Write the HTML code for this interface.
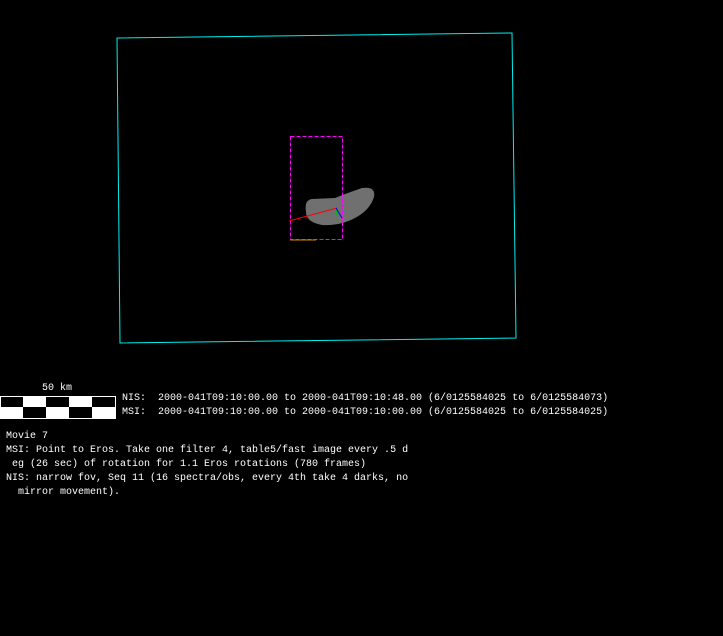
<!DOCTYPE html>
<html><head><style>
html,body{margin:0;padding:0;background:#000;width:723px;height:636px;overflow:hidden}
.t{position:absolute;font-family:"Liberation Mono",monospace;font-size:10px;line-height:14px;color:#fff;white-space:pre;letter-spacing:0}
</style></head><body>
<svg width="723" height="636" style="position:absolute;left:0;top:0">
<polygon points="117,38 512,33 516,338 120,343" fill="none" stroke="#00f0f0" stroke-width="1"/>
<path d="M306,212 Q304,200 312,199 L335,198 Q350,192 362,188 Q376,186 374,197 Q370,210 355,218 Q340,226 322,225 Q306,222 306,212 Z" fill="#707070"/>
<rect x="290.5" y="136.5" width="52" height="103" fill="none" stroke="#ff00ff" stroke-dasharray="4,2"/>
<line x1="290" y1="240" x2="316" y2="240" stroke="#d08000"/>
<line x1="289" y1="221" x2="337" y2="208" stroke="#ff0000"/>
<line x1="336" y1="208" x2="338" y2="222" stroke="#00c000"/>
<line x1="336" y1="208" x2="342" y2="218" stroke="#0000ff"/>
<rect x="0.5" y="396.5" width="115" height="22" fill="#fff" stroke="#fff"/>
<rect x="1" y="397" width="22" height="10" fill="#000"/>
<rect x="46" y="397" width="23" height="10" fill="#000"/>
<rect x="92" y="397" width="23" height="10" fill="#000"/>
<rect x="23" y="407" width="23" height="11" fill="#000"/>
<rect x="69" y="407" width="23" height="11" fill="#000"/>
</svg>
<div class="t" style="left:42px;top:382px">50 km</div>
<div class="t" style="left:122px;top:392px">NIS:  2000-041T09:10:00.00 to 2000-041T09:10:48.00 (6/0125584025 to 6/0125584073)
MSI:  2000-041T09:10:00.00 to 2000-041T09:10:00.00 (6/0125584025 to 6/0125584025)</div>
<div class="t" style="left:6px;top:430px">Movie 7
MSI: Point to Eros. Take one filter 4, table5/fast image every .5 d
 eg (26 sec) of rotation for 1.1 Eros rotations (780 frames)
NIS: narrow fov, Seq 11 (16 spectra/obs, every 4th take 4 darks, no
  mirror movement).</div>
</body></html>
